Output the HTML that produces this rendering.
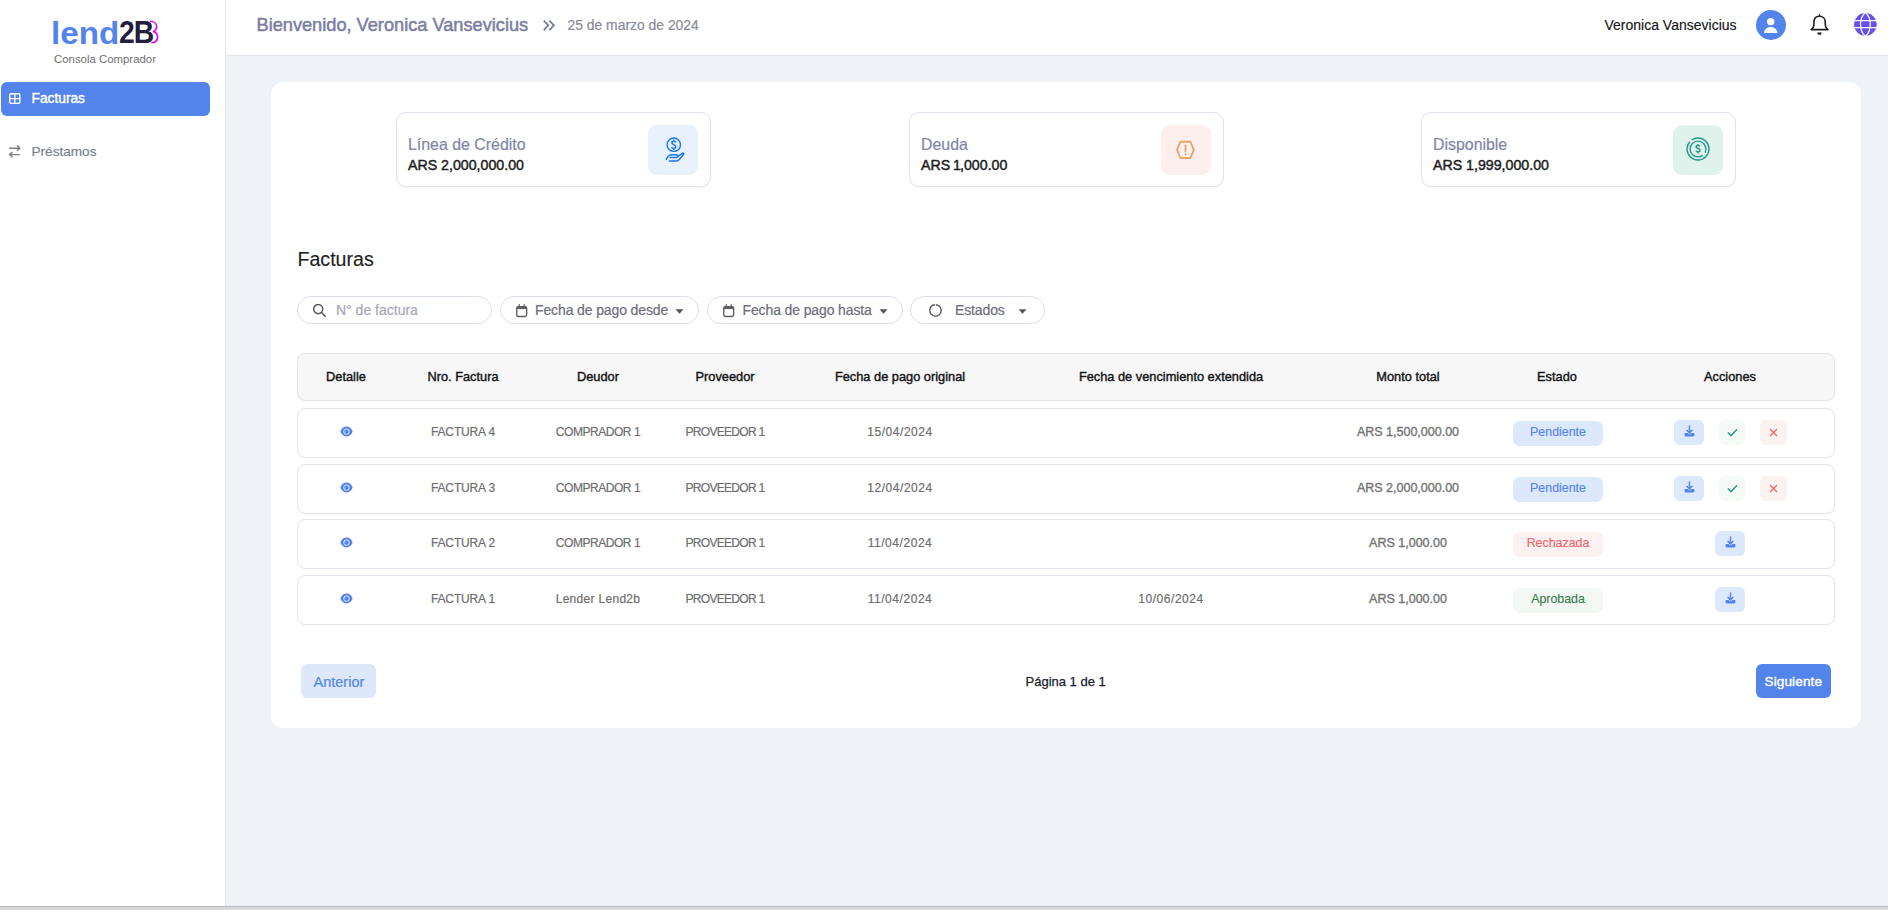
<!DOCTYPE html>
<html lang="es">
<head>
<meta charset="utf-8">
<title>lend2B - Consola Comprador</title>
<style>
*{box-sizing:border-box;margin:0;padding:0}
html,body{width:1888px;height:910px;overflow:hidden}
body{position:relative;background:#eff2f7;font-family:"Liberation Sans",sans-serif;color:#1a1a1a}
.a{position:absolute;white-space:nowrap}
.sidebar{position:absolute;z-index:0;left:0;top:0;width:226px;height:906px;background:#fff;border-right:1px solid #e2e5ea}
.header{position:absolute;left:226px;top:0;width:1662px;height:56px;background:#fff;border-bottom:1px solid #e3e6ec}
.bottombar{position:absolute;left:0;top:906px;width:1888px;height:4px;background:#d9d9d9;border-top:1px solid #b8b8b8}
.card{position:absolute;left:271px;top:82px;width:1590px;height:646px;background:#fff;border-radius:12px}
.stat{position:absolute;top:112px;width:315px;height:75px;border:1px solid #e2e2ea;border-radius:10px;background:#fff;box-shadow:0 1px 1px rgba(0,0,0,.04)}
.stat .t{position:absolute;left:11px;top:23px;font-size:15.9px;line-height:18px;color:#8185a8;-webkit-text-stroke:0.2px #8185a8}
.stat .v{position:absolute;left:11px;top:44px;font-size:14.2px;line-height:16px;font-weight:normal;color:#1e1e1e;letter-spacing:0px;-webkit-text-stroke:0.45px #1e1e1e}
.stat .ib{position:absolute;right:12px;top:12px;width:50px;height:50px;border-radius:9px;display:flex;align-items:center;justify-content:center}
.pill{position:absolute;top:296px;height:28px;border:1px solid #dedee6;border-radius:14px;background:#fff}
.pill .tx{position:absolute;top:5px;font-size:14px;line-height:16px;color:#6d6d7d;letter-spacing:-0.12px;-webkit-text-stroke:0.2px currentColor}
.thead{position:absolute;left:297px;top:353px;width:1538px;height:48px;background:#f7f7f8;border:1px solid #e4e4ea;border-radius:8px}
.row{position:absolute;left:297px;width:1538px;height:50px;background:#fff;border:1px solid #e4e4ea;border-radius:8px}
.th{position:absolute;top:16px;font-size:12.8px;line-height:14px;color:#141414;-webkit-text-stroke:0.4px #141414;transform:translateX(-50%)}
.td{position:absolute;top:15.5px;font-size:12px;line-height:14px;color:#6e6e6e;-webkit-text-stroke:0.2px #6e6e6e;transform:translateX(-50%)}
.badge{position:absolute;left:1215px;top:12px;width:90px;height:25px;border-radius:7px;font-size:12.4px;line-height:23px;text-align:center;-webkit-text-stroke:0.15px currentColor}
.act{position:absolute;top:11px;height:25px;border-radius:6px;display:flex;align-items:center;justify-content:center}
</style>
</head>
<body>
<!-- SIDEBAR -->
<div class="sidebar">
  <div class="a" style="left:51px;top:17px;font-size:31px;line-height:34px;font-weight:bold;color:#5384ec;transform:scaleX(1.07);transform-origin:0 0">lend</div>
  <div class="a" style="left:118.5px;top:15px;font-size:32px;line-height:34px;font-weight:bold;color:#231e3f;letter-spacing:-1.2px;transform:scaleX(0.885);transform-origin:0 0">2B</div>
  <svg class="a" style="left:145.3px;top:18px" width="16" height="28" viewBox="0 0 16 28"><path d="M5 3.3C9 3.3 11.6 5.5 11.6 8.5 11.6 11 10 13 8 13.5 11 14.2 12.6 16.3 12.6 19 12.6 22.5 10 24.6 6.3 24.7" fill="none" stroke="#e100ff" stroke-width="1.6"/></svg>
  <div class="a" style="left:54px;top:52px;font-size:11.4px;line-height:14px;color:#6f6f6f">Consola Comprador</div>

  <div class="a" style="left:1px;top:82px;width:209px;height:34px;background:#5384ec;border-radius:6px"></div>
  <svg class="a" style="left:9px;top:93px" width="12" height="12" viewBox="0 0 12 12"><rect x="0.7" y="0.7" width="10.2" height="9.7" rx="1.4" fill="none" stroke="#fff" stroke-width="1.4"/><path d="M5.8 1v9.4M1 5.55h9.8" stroke="#fff" stroke-width="1.3"/></svg>
  <div class="a" style="left:31.5px;top:91px;font-size:13.75px;line-height:16px;color:#fff;-webkit-text-stroke:0.4px #fff">Facturas</div>

  <svg class="a" style="left:8px;top:145px" width="14" height="14" viewBox="0 0 14 14"><path d="M1.2 3.2H11.4M9.1 0.6L11.8 3.2 9.1 5.8M11.9 9.6H1.8M4.4 7L1.6 9.6 4.4 12.3" fill="none" stroke="#7b7f88" stroke-width="1.45"/></svg>
  <div class="a" style="left:31.5px;top:144px;font-size:13.6px;line-height:16px;color:#7b8190;-webkit-text-stroke:0.2px #7b8190">Préstamos</div>
</div>

<!-- HEADER -->
<div class="header"></div>
<div class="a" style="left:256.5px;top:14.5px;font-size:18.2px;line-height:21px;color:#7b7ea3;-webkit-text-stroke:0.5px #7b7ea3">Bienvenido, Veronica Vansevicius</div>
<svg class="a" style="left:542px;top:19px" width="14" height="13" viewBox="0 0 14 13"><path d="M1.8 1.6L6.3 6.3 1.8 11.1M7.4 1.6L11.9 6.3 7.4 11.1" fill="none" stroke="#7579a0" stroke-width="1.75"/></svg>
<div class="a" style="left:567.5px;top:17px;font-size:13.9px;line-height:16px;color:#8a8a9a;-webkit-text-stroke:0.2px #8a8a9a">25 de marzo de 2024</div>
<div class="a" style="left:1604.5px;top:17px;font-size:14px;line-height:16px;color:#151515;-webkit-text-stroke:0.15px #151515">Veronica Vansevicius</div>
<svg class="a" style="left:1756px;top:10px" width="30" height="30" viewBox="0 0 30 30"><circle cx="15" cy="15" r="15" fill="#5384ec"/><circle cx="14.7" cy="11.6" r="3.7" fill="#fff"/><path d="M8 22.9C8 19.6 10.9 16.9 14.7 16.9S21.4 19.6 21.4 22.9Z" fill="#fff"/></svg>
<svg class="a" style="left:1809px;top:12px" width="22" height="24" viewBox="0 0 22 24"><path d="M10.5 4.3C7.1 4.3 5.1 6.6 5 9.6L4.8 13.6C4.7 15.2 3.6 16.4 2.1 17.6H19C17.5 16.4 16.5 15.2 16.4 13.6L16.2 9.6C16.1 6.6 13.9 4.3 10.5 4.3Z" fill="none" stroke="#1f1f1f" stroke-width="1.6" stroke-linejoin="round"/><path d="M10.5 1.2L9.3 4.5H11.7Z" fill="#1f1f1f"/><path d="M8.3 20.4H12.7C12.7 21.8 11.8 22.7 10.5 22.7 9.2 22.7 8.3 21.8 8.3 20.4Z" fill="#1f1f1f"/></svg>
<svg class="a" style="left:1853px;top:12px" width="25" height="25" viewBox="0 0 25 25"><circle cx="12.4" cy="12.4" r="11.3" fill="#6650ec"/><path d="M12.4 0.6C18.9 6 18.9 18.8 12.4 24.2 5.9 18.8 5.9 6 12.4 0.6Z" fill="none" stroke="#fff" stroke-width="1.25"/><path d="M0 8.6h25M0 15.6h25" stroke="#fff" stroke-width="1.25"/></svg>

<!-- CARD -->
<div class="card"></div>

<div class="stat" style="left:396px">
  <div class="t">Línea de Crédito</div>
  <div class="v">ARS 2,000,000.00</div>
  <div class="ib" style="background:#e8f2fd">
    <svg class="a" style="left:12px;top:9px" width="26" height="30" viewBox="0 0 26 30"><circle cx="13.8" cy="10.7" r="6.7" fill="none" stroke="#1877f2" stroke-width="1.4"/><path d="M15.9 8.4C15.5 7.6 14.7 7.2 13.8 7.2 12.6 7.2 11.8 7.9 11.8 8.8 11.8 10.9 15.9 10.3 15.9 12.6 15.9 13.6 15 14.3 13.7 14.3 12.7 14.3 11.9 13.8 11.5 13M13.8 5.6v1.6M13.8 14.3v1.6" fill="none" stroke="#1877f2" stroke-width="1.5"/><path d="M6.3 25.5C7.5 22.5 9 21 11 20.8H16.5C17.7 20.8 17.7 23.4 16.5 23.4H10.2M17 23.2L22.3 19.3C23.4 18.6 24.3 19.7 23.5 20.5L19.4 25.4C18.7 26.3 17.9 27 16.4 27H9.5" fill="none" stroke="#1877f2" stroke-width="1.5" stroke-linecap="round" stroke-linejoin="round"/></svg>
  </div>
</div>
<div class="stat" style="left:909px">
  <div class="t">Deuda</div>
  <div class="v">ARS<span style="letter-spacing:-1px"> 1</span>,000.00</div>
  <div class="ib" style="background:#fcefee">
    <svg width="22" height="22" viewBox="0 0 22 22"><path d="M5.4 2.7H15.4L18.8 10.8 15.4 19H5.4L2 10.8Z" fill="none" stroke="#eca46e" stroke-width="1.9" stroke-linejoin="round"/><path d="M10.5 6.3v6.1" stroke="#eca46e" stroke-width="1.8" stroke-linecap="round"/><circle cx="10.5" cy="15.4" r="1" fill="#eca46e"/></svg>
  </div>
</div>
<div class="stat" style="left:1421px">
  <div class="t">Disponible</div>
  <div class="v">ARS 1,999,000.00</div>
  <div class="ib" style="background:#dff3ec">
    <svg width="24" height="24" viewBox="0 0 24 24" style="position:relative;top:-0.6px;left:0.3px"><circle cx="12" cy="12" r="11" fill="none" stroke="#26988a" stroke-width="1.4" stroke-dasharray="42.3 2.6 100"/><circle cx="12" cy="12" r="7.9" fill="none" stroke="#26988a" stroke-width="1.4" stroke-dasharray="3.9 3.4 100"/><path d="M14 9.5C13.6 8.8 12.9 8.4 12 8.4 10.9 8.4 10.1 9.1 10.1 9.9 10.1 11.8 14 11.2 14 13.3 14 14.2 13.2 14.9 12 14.9 11.1 14.9 10.3 14.4 10 13.7M12 7v1.4M12 14.9v1.5" fill="none" stroke="#26988a" stroke-width="1.5"/></svg>
  </div>
</div>

<div class="a" style="left:297.5px;top:248px;font-size:19.6px;line-height:22px;color:#1f1f1f;-webkit-text-stroke:0.15px #1f1f1f">Facturas</div>

<!-- FILTERS -->
<div class="pill" style="left:297px;width:195px">
  <svg class="a" style="left:15px;top:7px" width="14" height="14" viewBox="0 0 14 14"><circle cx="5.2" cy="5.1" r="4.55" fill="none" stroke="#585858" stroke-width="1.45"/><path d="M8.6 8.5l3.6 3.7" stroke="#585858" stroke-width="1.5" stroke-linecap="round"/></svg>
  <div class="tx" style="left:38px;color:#a6a6b6;font-size:14px;letter-spacing:0">N° de factura</div>
</div>
<div class="pill" style="left:500px;width:199px">
  <svg class="a" style="left:15px;top:7px" width="12" height="14" viewBox="0 0 12 14"><rect x="0.75" y="2.75" width="9.9" height="9.7" rx="1.6" fill="none" stroke="#5f5f5f" stroke-width="1.4"/><path d="M0.8 4h9.8" stroke="#5f5f5f" stroke-width="2.2"/><path d="M3.3 0.2v2.6M8.2 0.2v2.6" stroke="#5f5f5f" stroke-width="1.3"/></svg>
  <div class="tx" style="left:34px">Fecha de pago desde</div>
  <svg class="a" style="left:174px;top:12px" width="9" height="5" viewBox="0 0 9 5"><path d="M0.5 0.3h8L4.5 4.7z" fill="#555"/></svg>
</div>
<div class="pill" style="left:707px;width:196px">
  <svg class="a" style="left:15px;top:7px" width="12" height="14" viewBox="0 0 12 14"><rect x="0.75" y="2.75" width="9.9" height="9.7" rx="1.6" fill="none" stroke="#5f5f5f" stroke-width="1.4"/><path d="M0.8 4h9.8" stroke="#5f5f5f" stroke-width="2.2"/><path d="M3.3 0.2v2.6M8.2 0.2v2.6" stroke="#5f5f5f" stroke-width="1.3"/></svg>
  <div class="tx" style="left:34.5px">Fecha de pago hasta</div>
  <svg class="a" style="left:171px;top:12px" width="9" height="5" viewBox="0 0 9 5"><path d="M0.5 0.3h8L4.5 4.7z" fill="#555"/></svg>
</div>
<div class="pill" style="left:910px;width:135px">
  <svg class="a" style="left:18px;top:7px" width="14" height="14" viewBox="0 0 14 14"><circle cx="6.5" cy="6.4" r="5.7" fill="none" stroke="#5a5a5a" stroke-width="1.4" stroke-dasharray="33.9 1.9" transform="rotate(-86 6.5 6.4)"/></svg>
  <div class="tx" style="left:44px">Estados</div>
  <svg class="a" style="left:107px;top:12px" width="9" height="5" viewBox="0 0 9 5"><path d="M0.5 0.3h8L4.5 4.7z" fill="#555"/></svg>
</div>

<!-- TABLE -->
<div class="thead">
  <div class="th" style="left:48px">Detalle</div>
  <div class="th" style="left:165px">Nro. Factura</div>
  <div class="th" style="left:300px">Deudor</div>
  <div class="th" style="left:427px">Proveedor</div>
  <div class="th" style="left:602px">Fecha de pago original</div>
  <div class="th" style="left:873px">Fecha de vencimiento extendida</div>
  <div class="th" style="left:1110px">Monto total</div>
  <div class="th" style="left:1259px">Estado</div>
  <div class="th" style="left:1432px">Acciones</div>
</div>

<!-- ROWS -->
<div class="row" style="top:408px">
  <svg class="a" style="left:42px;top:17px" width="13" height="11" viewBox="0 0 13 11"><path d="M6.5 0.6C3.6 0.6 1.4 2.6 0.4 5.5c1 2.9 3.2 4.9 6.1 4.9s5.1-2 6.1-4.9C11.6 2.6 9.4 0.6 6.5 0.6z" fill="#5384ec"/><circle cx="6.5" cy="5.6" r="2.75" fill="none" stroke="#fff" stroke-width="0.85"/><circle cx="6.5" cy="5.6" r="1.5" fill="#5384ec"/><circle cx="5.7" cy="4.9" r="0.45" fill="#fff" fill-opacity="0.7"/></svg>
  <div class="td" style="left:165px;letter-spacing:-0.15px">FACTURA 4</div>
  <div class="td" style="left:300px;letter-spacing:-0.45px">COMPRADOR 1</div>
  <div class="td" style="left:427px;letter-spacing:-0.7px">PROVEEDOR 1</div>
  <div class="td" style="left:602px;letter-spacing:0.55px">15/04/2024</div>
  <div class="td" style="left:1110px;font-size:12.5px;color:#747474;-webkit-text-stroke:0.35px #747474">ARS 1,500,000.00</div>
  <div class="badge" style="background:#dce8fb;color:#5384ec">Pendiente</div>
  <div class="act" style="left:1376px;width:30px;background:#dce8fb"><svg width="13" height="13" viewBox="0 0 13 13" style="position:relative;top:-1.3px"><path d="M6.5 0.5v7.2M3.6 5l2.9 2.9L9.4 5" fill="none" stroke="#5384ec" stroke-width="1.5"/><path d="M1.5 9.2c0-.8.6-1.3 1.4-1.3h1.7l1.9 1.5 1.9-1.5h1.7c.8 0 1.4.5 1.4 1.3v.8c0 .8-.6 1.4-1.4 1.4H2.9c-.8 0-1.4-.6-1.4-1.4z" fill="#5384ec"/></svg></div>
  <div class="act" style="left:1421px;width:26px;background:#f6faf7"><svg width="11" height="9" viewBox="0 0 11 9"><path d="M0.9 4.6l3 3L10.1 1.3" fill="none" stroke="#2a9a86" stroke-width="1.45"/></svg></div>
  <div class="act" style="left:1462px;width:27px;background:#fdf2f2"><svg width="9" height="9" viewBox="0 0 9 9"><path d="M1 1l7 7M8 1L1 8" fill="none" stroke="#f36a6a" stroke-width="1.35"/></svg></div>
</div>
<div class="row" style="top:464px">
  <svg class="a" style="left:42px;top:17px" width="13" height="11" viewBox="0 0 13 11"><path d="M6.5 0.6C3.6 0.6 1.4 2.6 0.4 5.5c1 2.9 3.2 4.9 6.1 4.9s5.1-2 6.1-4.9C11.6 2.6 9.4 0.6 6.5 0.6z" fill="#5384ec"/><circle cx="6.5" cy="5.6" r="2.75" fill="none" stroke="#fff" stroke-width="0.85"/><circle cx="6.5" cy="5.6" r="1.5" fill="#5384ec"/><circle cx="5.7" cy="4.9" r="0.45" fill="#fff" fill-opacity="0.7"/></svg>
  <div class="td" style="left:165px;letter-spacing:-0.15px">FACTURA 3</div>
  <div class="td" style="left:300px;letter-spacing:-0.45px">COMPRADOR 1</div>
  <div class="td" style="left:427px;letter-spacing:-0.7px">PROVEEDOR 1</div>
  <div class="td" style="left:602px;letter-spacing:0.55px">12/04/2024</div>
  <div class="td" style="left:1110px;font-size:12.5px;color:#747474;-webkit-text-stroke:0.35px #747474">ARS 2,000,000.00</div>
  <div class="badge" style="background:#dce8fb;color:#5384ec">Pendiente</div>
  <div class="act" style="left:1376px;width:30px;background:#dce8fb"><svg width="13" height="13" viewBox="0 0 13 13" style="position:relative;top:-1.3px"><path d="M6.5 0.5v7.2M3.6 5l2.9 2.9L9.4 5" fill="none" stroke="#5384ec" stroke-width="1.5"/><path d="M1.5 9.2c0-.8.6-1.3 1.4-1.3h1.7l1.9 1.5 1.9-1.5h1.7c.8 0 1.4.5 1.4 1.3v.8c0 .8-.6 1.4-1.4 1.4H2.9c-.8 0-1.4-.6-1.4-1.4z" fill="#5384ec"/></svg></div>
  <div class="act" style="left:1421px;width:26px;background:#f6faf7"><svg width="11" height="9" viewBox="0 0 11 9"><path d="M0.9 4.6l3 3L10.1 1.3" fill="none" stroke="#2a9a86" stroke-width="1.45"/></svg></div>
  <div class="act" style="left:1462px;width:27px;background:#fdf2f2"><svg width="9" height="9" viewBox="0 0 9 9"><path d="M1 1l7 7M8 1L1 8" fill="none" stroke="#f36a6a" stroke-width="1.35"/></svg></div>
</div>
<div class="row" style="top:519px">
  <svg class="a" style="left:42px;top:17px" width="13" height="11" viewBox="0 0 13 11"><path d="M6.5 0.6C3.6 0.6 1.4 2.6 0.4 5.5c1 2.9 3.2 4.9 6.1 4.9s5.1-2 6.1-4.9C11.6 2.6 9.4 0.6 6.5 0.6z" fill="#5384ec"/><circle cx="6.5" cy="5.6" r="2.75" fill="none" stroke="#fff" stroke-width="0.85"/><circle cx="6.5" cy="5.6" r="1.5" fill="#5384ec"/><circle cx="5.7" cy="4.9" r="0.45" fill="#fff" fill-opacity="0.7"/></svg>
  <div class="td" style="left:165px;letter-spacing:-0.15px">FACTURA 2</div>
  <div class="td" style="left:300px;letter-spacing:-0.45px">COMPRADOR 1</div>
  <div class="td" style="left:427px;letter-spacing:-0.7px">PROVEEDOR 1</div>
  <div class="td" style="left:602px;letter-spacing:0.55px">11/04/2024</div>
  <div class="td" style="left:1110px;font-size:12.5px;color:#747474;-webkit-text-stroke:0.35px #747474">ARS 1,000.00</div>
  <div class="badge" style="background:#fdf1f1;color:#f0676a">Rechazada</div>
  <div class="act" style="left:1417px;width:30px;background:#dce8fb"><svg width="13" height="13" viewBox="0 0 13 13" style="position:relative;top:-1.3px"><path d="M6.5 0.5v7.2M3.6 5l2.9 2.9L9.4 5" fill="none" stroke="#5384ec" stroke-width="1.5"/><path d="M1.5 9.2c0-.8.6-1.3 1.4-1.3h1.7l1.9 1.5 1.9-1.5h1.7c.8 0 1.4.5 1.4 1.3v.8c0 .8-.6 1.4-1.4 1.4H2.9c-.8 0-1.4-.6-1.4-1.4z" fill="#5384ec"/></svg></div>
</div>
<div class="row" style="top:575px">
  <svg class="a" style="left:42px;top:17px" width="13" height="11" viewBox="0 0 13 11"><path d="M6.5 0.6C3.6 0.6 1.4 2.6 0.4 5.5c1 2.9 3.2 4.9 6.1 4.9s5.1-2 6.1-4.9C11.6 2.6 9.4 0.6 6.5 0.6z" fill="#5384ec"/><circle cx="6.5" cy="5.6" r="2.75" fill="none" stroke="#fff" stroke-width="0.85"/><circle cx="6.5" cy="5.6" r="1.5" fill="#5384ec"/><circle cx="5.7" cy="4.9" r="0.45" fill="#fff" fill-opacity="0.7"/></svg>
  <div class="td" style="left:165px;letter-spacing:-0.15px">FACTURA 1</div>
  <div class="td" style="left:300px;letter-spacing:0.3px">Lender Lend2b</div>
  <div class="td" style="left:427px;letter-spacing:-0.7px">PROVEEDOR 1</div>
  <div class="td" style="left:602px;letter-spacing:0.55px">11/04/2024</div>
  <div class="td" style="left:873px;letter-spacing:0.55px">10/06/2024</div>
  <div class="td" style="left:1110px;font-size:12.5px;color:#747474;-webkit-text-stroke:0.35px #747474">ARS 1,000.00</div>
  <div class="badge" style="background:#f4f8f5;color:#3b7d4f">Aprobada</div>
  <div class="act" style="left:1417px;width:30px;background:#dce8fb"><svg width="13" height="13" viewBox="0 0 13 13" style="position:relative;top:-1.3px"><path d="M6.5 0.5v7.2M3.6 5l2.9 2.9L9.4 5" fill="none" stroke="#5384ec" stroke-width="1.5"/><path d="M1.5 9.2c0-.8.6-1.3 1.4-1.3h1.7l1.9 1.5 1.9-1.5h1.7c.8 0 1.4.5 1.4 1.3v.8c0 .8-.6 1.4-1.4 1.4H2.9c-.8 0-1.4-.6-1.4-1.4z" fill="#5384ec"/></svg></div>
</div>
<!-- /ROWS -->

<!-- PAGINATION -->
<div class="a" style="left:301px;top:664px;width:75px;height:34px;background:#dee8fb;border-radius:6px"></div>
<div class="a" style="left:313.5px;top:673.5px;font-size:14.5px;line-height:16px;color:#5384ec;-webkit-text-stroke:0.2px #5384ec">Anterior</div>
<div class="a" style="left:1025.5px;top:674px;font-size:13px;line-height:16px;color:#1b1b2b;-webkit-text-stroke:0.25px #1b1b2b">Página 1 de 1</div>
<div class="a" style="left:1756px;top:664px;width:75px;height:34px;background:#5384ec;border-radius:6px"></div>
<div class="a" style="left:1764.5px;top:674px;font-size:13.6px;line-height:16px;color:#fff;letter-spacing:0.1px;-webkit-text-stroke:0.4px #fff">Siguiente</div>

<div class="bottombar"></div>
</body>
</html>
